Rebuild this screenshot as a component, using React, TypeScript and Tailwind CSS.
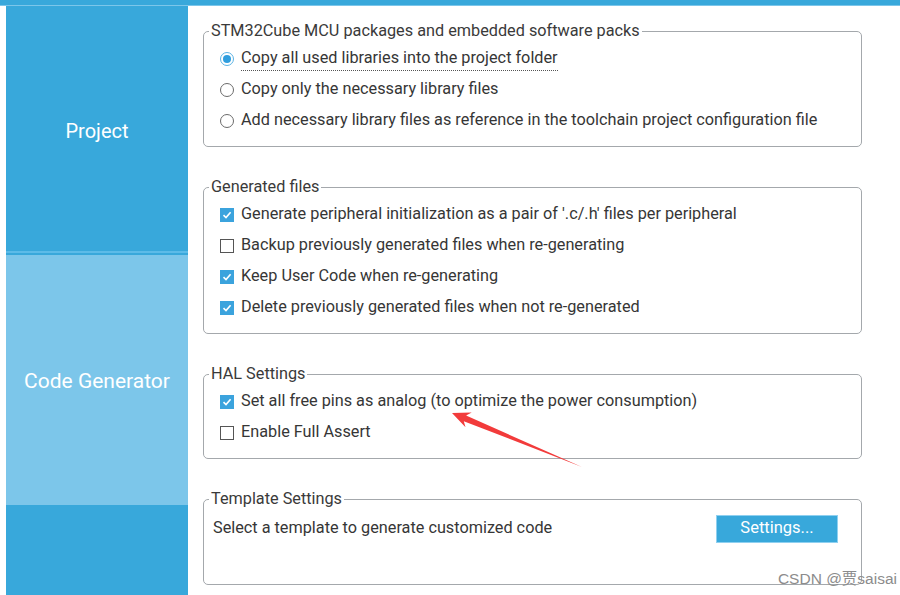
import React from 'react';

const font = { fontFamily: 'Roboto, "Liberation Sans", Arial, sans-serif' };

const Radio: React.FC<{ checked?: boolean }> = ({ checked }) =>
  checked ? (
    <span className="w-[14px] h-[14px] rounded-full border border-[#5bb3e4] bg-white flex items-center justify-center shrink-0">
      <span className="w-[8px] h-[8px] rounded-full bg-[#2f9ede]" />
    </span>
  ) : (
    <span className="w-[14px] h-[14px] rounded-full border border-[#6b6b6b] bg-white shrink-0" />
  );

const Check: React.FC<{ checked?: boolean }> = ({ checked }) =>
  checked ? (
    <span className="w-[14px] h-[14px] bg-[#3ba3dd] flex items-center justify-center shrink-0">
      <svg width="10" height="10" viewBox="0 0 10 10">
        <path d="M1.5 5.2 L4 7.6 L8.6 2.2" fill="none" stroke="white" strokeWidth="1.6" />
      </svg>
    </span>
  ) : (
    <span className="w-[14px] h-[14px] border border-[#555] bg-white shrink-0" />
  );

const Row: React.FC<{ control: React.ReactNode; children: React.ReactNode }> = ({ control, children }) => (
  <div className="h-[31px] flex items-center gap-[7px]">
    {control}
    <span className="text-[16.25px] text-[#363636]">{children}</span>
  </div>
);

const Group: React.FC<{ title: string; className?: string; children: React.ReactNode }> = ({ title, className, children }) => (
  <fieldset className={`border border-[#a4a8ac] rounded-[5px] w-[659px] ${className ?? ''}`}>
    <legend className="ml-[5px] px-[2px] leading-[18px] text-[16.25px] text-[#3a3a3a]">{title}</legend>
    <div className="pl-[16px] pr-[23px] pt-[3px]">{children}</div>
  </fieldset>
);

const App: React.FC = () => {
  return (
    <div className="w-[900px] h-[595px] bg-white relative overflow-hidden flex flex-col" style={font}>
      {/* top strip */}
      <div className="h-[5px] bg-[#38a8db] shrink-0" />
      <div className="h-px bg-[#7cc6ea] shrink-0" />

      <div className="flex flex-1 min-h-0">
        <div className="w-[6px] shrink-0" />

        {/* sidebar */}
        <div className="w-[182px] shrink-0 flex flex-col">
          <div className="h-[245px] bg-[#38a8db] flex items-center justify-center pt-[4px]">
            <span className="text-white text-[20px]">Project</span>
          </div>
          <div className="h-[2px] bg-[#5cbbe8]" />
          <div className="h-[2px] bg-[#38a8db]" />
          <div className="h-[250px] bg-[#7cc6ea] flex items-center justify-center pt-[4px]">
            <span className="text-white text-[21px]">Code Generator</span>
          </div>
          <div className="flex-1 bg-[#38a8db]" />
        </div>

        {/* main */}
        <div className="flex-1 pl-[15px] pt-[16px] flex flex-col gap-[31px]">
          <Group title="STM32Cube MCU packages and embedded software packs" className="pb-[10px]">
            <Row control={<Radio checked />}>
              <span className="border-b border-dotted border-[#555] pb-[3px]">Copy all used libraries into the project folder</span>
            </Row>
            <Row control={<Radio />}>Copy only the necessary library files</Row>
            <Row control={<Radio />}>Add necessary library files as reference in the toolchain project configuration file</Row>
          </Group>

          <Group title="Generated files" className="pb-[10px]">
            <Row control={<Check checked />}>Generate peripheral initialization as a pair of '.c/.h' files per peripheral</Row>
            <Row control={<Check />}>Backup previously generated files when re-generating</Row>
            <Row control={<Check checked />}>Keep User Code when re-generating</Row>
            <Row control={<Check checked />}>Delete previously generated files when not re-generated</Row>
          </Group>

          <Group title="HAL Settings" className="pb-[10px]">
            <Row control={<Check checked />}>Set all free pins as analog (to optimize the power consumption)</Row>
            <Row control={<Check />}>Enable Full Assert</Row>
          </Group>

          <Group title="Template Settings" className="pb-[40px]">
            <div className="h-[31px] mt-[2px] flex items-center justify-between">
              <span className="text-[16.25px] text-[#363636] -ml-[7px]">Select a template to generate customized code</span>
              <button className="w-[122px] h-[28px] bg-[#38a8db] border border-[#8fd0f0] text-white text-[16.5px]">
                Settings...
              </button>
            </div>
          </Group>
        </div>
      </div>

      {/* red annotation arrow */}
      <svg className="absolute left-0 top-0 pointer-events-none" width="900" height="595">
        <polygon
          points="452,413 471.7,412.5 466.1,415.6 582,467 463.8,421.2 465.5,427.3"
          fill="#f23b3b"
        />
      </svg>

      {/* watermark */}
      <div
        className="absolute right-[3px] bottom-[9px] text-[15.5px] text-[#8c8c8c] leading-none"
        style={{ fontFamily: '"Liberation Sans", "Noto Sans CJK SC", sans-serif' }}
      >
        CSDN @贾saisai
      </div>
    </div>
  );
};

export default App;
